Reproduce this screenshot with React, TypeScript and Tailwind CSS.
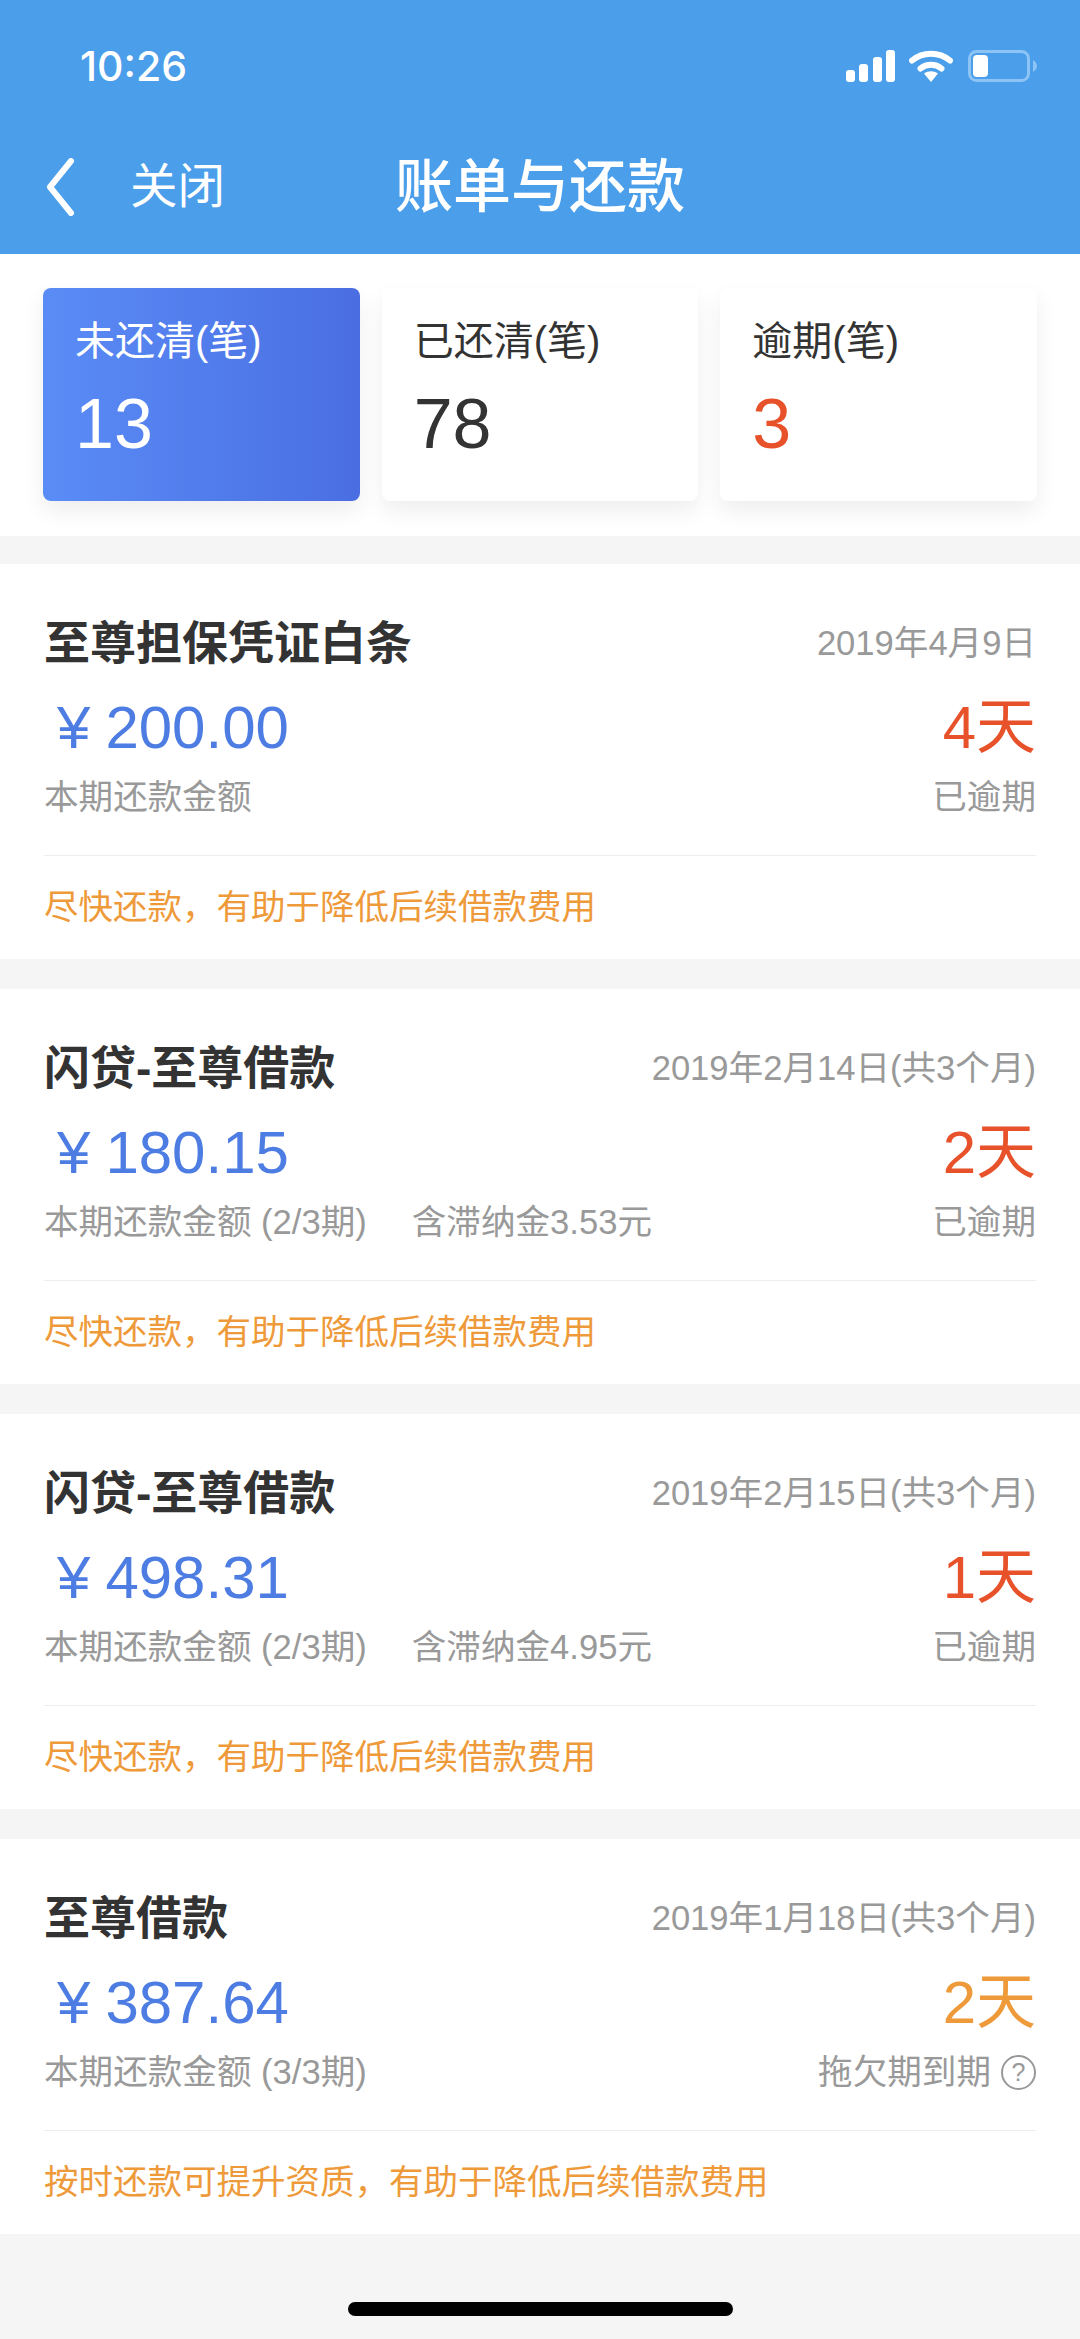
const FONT = "font-['Liberation_Sans','Noto_Sans_CJK_SC',sans-serif]";

type Bill = {
  title: string;
  date: string;
  amount: string;
  sub: string;
  fee?: string;
  days: string;
  dayColor: string;
  status: string;
  help?: boolean;
  hint: string;
};

const bills: Bill[] = [
  { title: "至尊担保凭证白条", date: "2019年4月9日", amount: "200.00", sub: "本期还款金额", days: "4天", dayColor: "text-[#e8522b]", status: "已逾期", hint: "尽快还款，有助于降低后续借款费用" },
  { title: "闪贷-至尊借款", date: "2019年2月14日(共3个月)", amount: "180.15", sub: "本期还款金额 (2/3期)", fee: "含滞纳金3.53元", days: "2天", dayColor: "text-[#e8522b]", status: "已逾期", hint: "尽快还款，有助于降低后续借款费用" },
  { title: "闪贷-至尊借款", date: "2019年2月15日(共3个月)", amount: "498.31", sub: "本期还款金额 (2/3期)", fee: "含滞纳金4.95元", days: "1天", dayColor: "text-[#e8522b]", status: "已逾期", hint: "尽快还款，有助于降低后续借款费用" },
  { title: "至尊借款", date: "2019年1月18日(共3个月)", amount: "387.64", sub: "本期还款金额 (3/3期)", days: "2天", dayColor: "text-[#ee9a3a]", status: "拖欠期到期", help: true, hint: "按时还款可提升资质，有助于降低后续借款费用" },
];

function StatusIcons() {
  return (
    <div className="flex items-center gap-[14px]">
      <svg width="49" height="32" viewBox="0 0 49 32" fill="#fff">
        <rect x="0" y="20" width="9" height="12" rx="3" />
        <rect x="13" y="14" width="9" height="18" rx="3" />
        <rect x="27" y="7" width="9" height="25" rx="3" />
        <rect x="40" y="0" width="9" height="32" rx="3" />
      </svg>
      <svg width="44" height="32" viewBox="0 0 44 32" fill="none">
        <path d="M3 10.5C14 1.5 30 1.5 41 10.5" stroke="#fff" strokeWidth="6" strokeLinecap="round" />
        <path d="M11.5 18.5C17.5 13.5 26.5 13.5 32.5 18.5" stroke="#fff" strokeWidth="6" strokeLinecap="round" />
        <path d="M15 23.5C19.5 20.5 24.5 20.5 29 23.5L22 32Z" fill="#fff" />
      </svg>
      <svg width="70" height="32" viewBox="0 0 70 32" fill="none" className="ml-[1px]">
        <rect x="1.5" y="1.5" width="59" height="29" rx="7" stroke="#8cc4f5" strokeWidth="3" />
        <rect x="5" y="5" width="15" height="22" rx="4" fill="#fff" />
        <path d="M65 10C68 12 69 14 69 16C69 18 68 20 65 22Z" fill="#8cc4f5" />
      </svg>
    </div>
  );
}

function Stat({ label, value, active, color }: { label: string; value: string; active?: boolean; color?: string }) {
  return (
    <div
      className={`flex-1 h-[213px] rounded-[8px] pl-[32px] pt-[29px] shadow-[0_10px_22px_rgba(0,0,0,0.07)] ${
        active ? "bg-gradient-to-r from-[#5a8cf6] to-[#4a6ee2] text-white" : "bg-white text-[#333333]"
      }`}
    >
      <div className="text-[40px] leading-[48px]">{label}</div>
      <div className={`mt-[19px] text-[70px] leading-[80px] ${color ?? ""}`}>{value}</div>
    </div>
  );
}

function BillCard({ b }: { b: Bill }) {
  return (
    <section className="bg-white h-[395px] px-[44px] pt-[49px]">
      <div className="flex items-center justify-between h-[60px]">
        <h2 className="text-[46px] leading-[60px] font-semibold text-[#333333]">{b.title}</h2>
        <div className="text-[34.6px] leading-[46px] text-[#999999]">{b.date}</div>
      </div>
      <div className="mt-[20px] flex items-center justify-between h-[70px]">
        <div className="pl-[13px] text-[60px] leading-[70px] text-[#4d7de3]">
          <span className="mr-[15px]">¥</span>
          {b.amount}
        </div>
        <div className={`text-[60px] leading-[70px] ${b.dayColor}`}>{b.days}</div>
      </div>
      <div className="mt-[11px] flex items-center justify-between h-[46px] text-[34.6px] leading-[46px] text-[#999999]">
        <div>
          {b.sub}
          {b.fee && <span className="ml-[45px]">{b.fee}</span>}
        </div>
        <div className="flex items-center gap-[10px]">
          {b.status}
          {b.help && (
            <span className="flex w-[35px] h-[35px] items-center justify-center rounded-full border-2 border-[#999999] text-[25px] leading-none">
              ?
            </span>
          )}
        </div>
      </div>
      <div className="mt-[35px] h-px bg-[#eeeeee]" />
      <div className="mt-[28px] text-[34.5px] leading-[46px] text-[#ee9a3a]">{b.hint}</div>
    </section>
  );
}

export default function App() {
  return (
    <div className={`${FONT} w-[1080px] h-[2339px] overflow-hidden bg-[#f5f5f5] flex flex-col`}>
      <header className="h-[254px] bg-[#4a9eea] text-white">
        <div className="flex h-[132px] items-start justify-between pl-[80px] pr-[42px] pt-[42px]">
          <div className="font-['Inter',sans-serif] font-medium text-[41px] leading-[48px]">10:26</div>
          <div className="pt-[8px]">
            <StatusIcons />
          </div>
        </div>
        <div className="grid grid-cols-[1fr_auto_1fr] items-center h-[110px]">
          <div className="flex items-center pl-[45px]">
            <svg width="30" height="58" viewBox="0 0 30 58" fill="none">
              <path d="M26 3L5 29L26 55" stroke="#fff" strokeWidth="6" strokeLinecap="round" strokeLinejoin="round" />
            </svg>
            <span className="ml-[55px] text-[47.5px] leading-[60px] font-normal">关闭</span>
          </div>
          <h1 className="text-[58px] leading-[70px] font-medium">账单与还款</h1>
          <div />
        </div>
      </header>

      <div className="bg-white h-[282px] flex gap-[22px] px-[43px] pt-[34px] mb-[28px]">
        <Stat label="未还清(笔)" value="13" active />
        <Stat label="已还清(笔)" value="78" />
        <Stat label="逾期(笔)" value="3" color="text-[#e8522b]" />
      </div>

      <main className="flex flex-col gap-[30px]">
        {bills.map((b, i) => (
          <BillCard key={i} b={b} />
        ))}
      </main>

      <div className="flex justify-center pt-[68px]">
        <div className="w-[385px] h-[14px] rounded-full bg-black" />
      </div>
    </div>
  );
}
